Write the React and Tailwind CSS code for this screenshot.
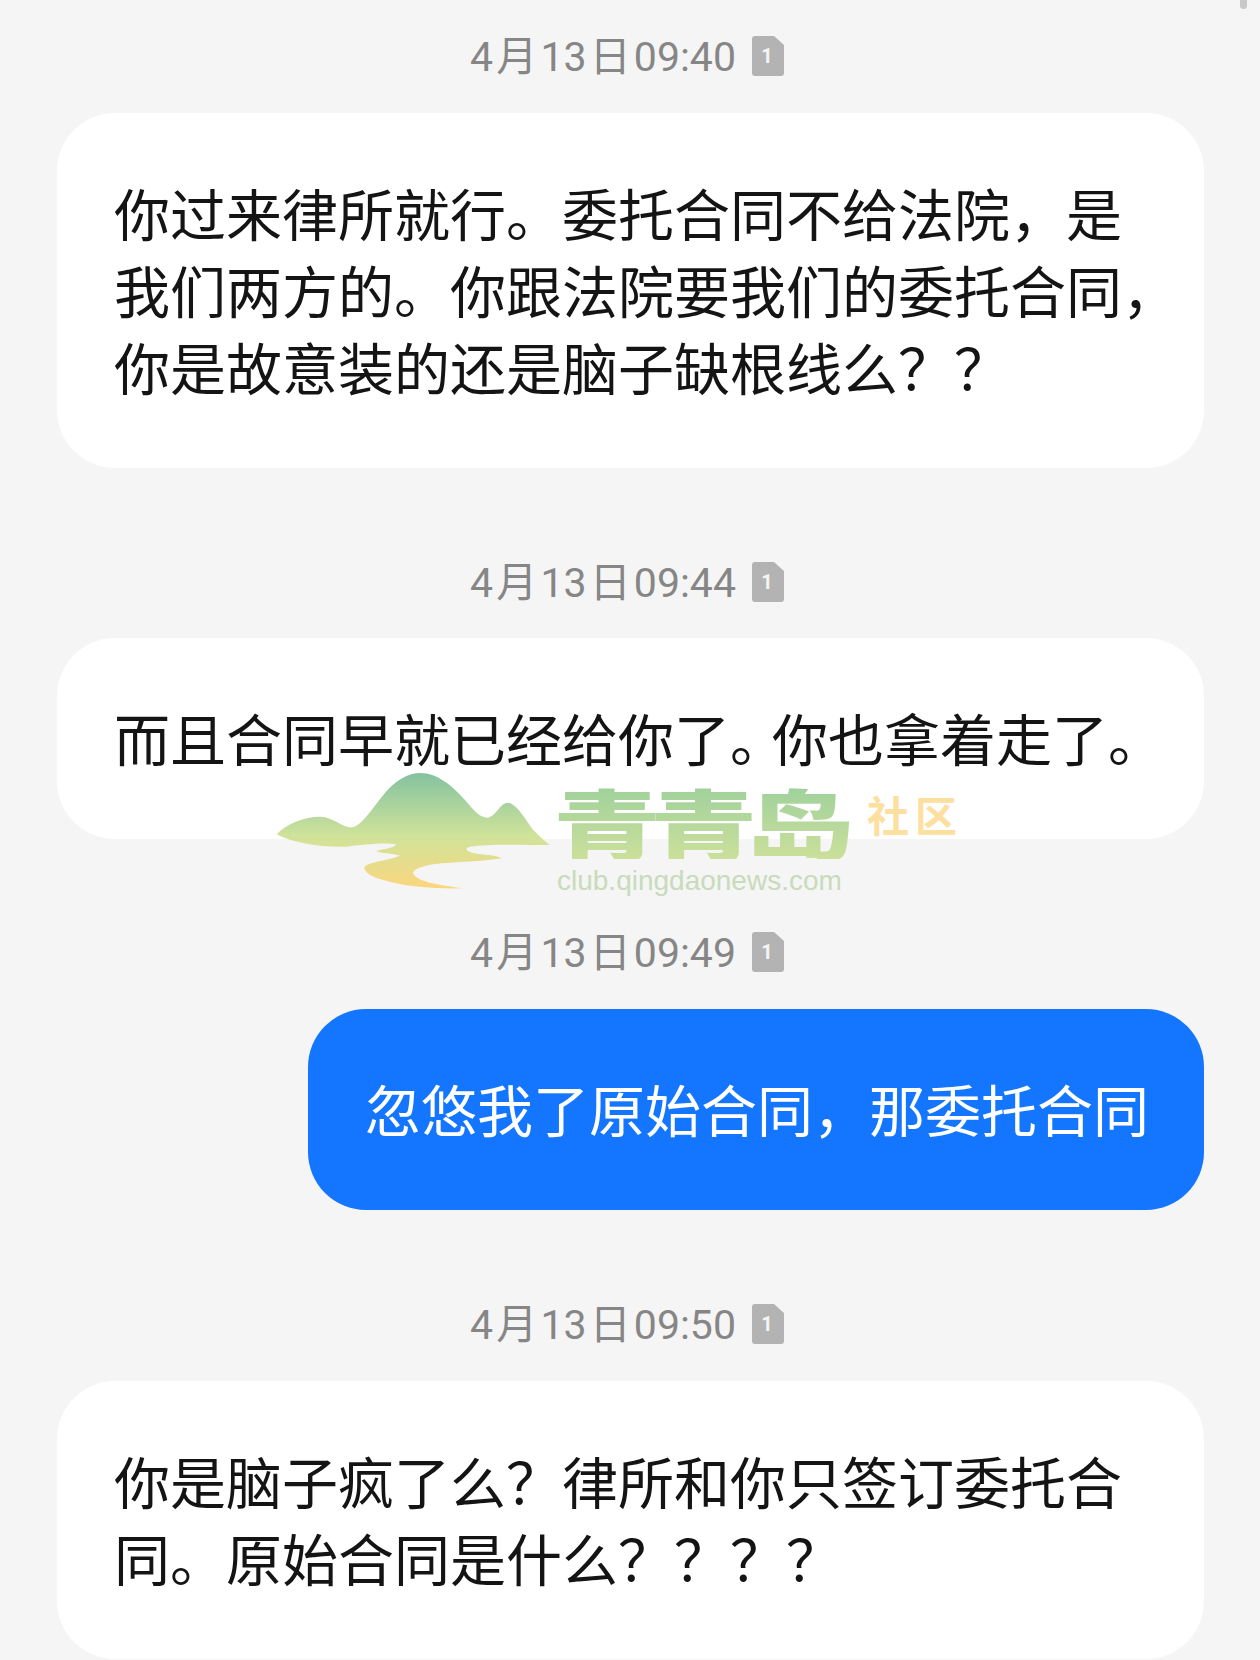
import React from 'react';

const FONT = 'font-["Noto_Sans_CJK_SC","Noto_Sans",sans-serif]';

function DocBadge() {
  return (
    <svg width="32" height="40" viewBox="0 0 32 40" className="block -ml-px -mt-[3px]">
      <path
        d="M3 0H22L32 9V37Q32 40 29 40H3Q0 40 0 37V3Q0 0 3 0Z"
        fill="#b3b3b3"
      />
      <text x="15" y="27" textAnchor="middle" fontSize="20" fontWeight="700" fill="#f5f5f5" fontFamily="Roboto, sans-serif">
        1
      </text>
    </svg>
  );
}

function TimeRow({ time, className }) {
  return (
    <div className={`h-14 pr-[6px] flex items-center justify-center gap-[17px] ${className}`}>
      <span className="text-[41px] leading-none text-[#868686] font-['Roboto','Noto_Sans_CJK_SC',sans-serif] [word-spacing:-7px]">
        4 月 13 日 {time}
      </span>
      <DocBadge />
    </div>
  );
}

function Bubble({ lines, mine }) {
  return (
    <div
      className={
        mine
          ? 'w-[896px] ml-auto -mr-px pl-[57px] pt-[60px] pb-[64px] rounded-[58px] bg-[#1476ff] text-white'
          : '-mr-px pl-[57px] pt-[60px] pb-[64px] rounded-[58px] bg-white text-[#141414]'
      }
    >
      {lines.map((line, i) => (
        <div key={i} className="text-[56px] leading-[77px] whitespace-nowrap">
          {line}
        </div>
      ))}
    </div>
  );
}

function Watermark() {
  return (
    <div className="absolute left-[270px] top-[765px] flex items-start pointer-events-none">
      <svg width="290" height="130" viewBox="0 0 870 390" className="block">
        <defs>
          <linearGradient id="hill" gradientUnits="userSpaceOnUse" x1="0" y1="24" x2="0" y2="370">
            <stop offset="0" stopColor="#84c2a0" />
            <stop offset="0.55" stopColor="#d0e39a" />
            <stop offset="1" stopColor="#fbd67e" />
          </linearGradient>
        </defs>
        <path
          d="M20 208C50 175 105 155 150 155C190 155 215 188 245 187C275 182 300 140 340 90C375 45 415 24 452 24C500 24 545 60 585 105C610 135 630 160 655 158C680 150 690 115 712 113C740 113 770 170 790 195C810 215 825 230 840 240C760 240 650 236 600 245C580 250 590 262 620 266C650 270 680 270 695 280C640 290 560 290 490 298C450 305 425 315 430 328C445 350 510 362 580 370C500 372 400 365 340 345C300 335 280 318 283 305C300 290 360 285 390 272C370 265 330 265 318 258C340 252 375 250 378 238C340 232 280 240 230 245C160 248 70 235 20 208Z"
          fill="url(#hill)"
        />
      </svg>
      <div className="-ml-[7px] mt-[18px] flex flex-col">
        <div className="flex items-start">
          <div className="w-[296px] h-[76px]">
            <span className="block origin-left [transform:scaleX(1.42)] text-[76px] leading-[76px] tracking-[-8px] font-black font-['Noto_Sans_CJK_SC',sans-serif] bg-gradient-to-b from-[#9dd09c] to-[#cbe09a] bg-clip-text text-transparent whitespace-nowrap">
              青青岛
            </span>
          </div>
          <span className="ml-[18px] mt-[8px] text-[42px] leading-[46px] font-bold tracking-[6px] text-[#fde0a0] font-['Noto_Sans_CJK_SC',sans-serif] whitespace-nowrap">
            社区
          </span>
        </div>
        <span className="mt-[8px] ml-[4px] text-[28px] leading-[28px] text-[#c8dbbb] font-['Liberation_Sans',sans-serif]">
          club.qingdaonews.com
        </span>
      </div>
    </div>
  );
}

export default function App() {
  return (
    <div className={`relative w-[1260px] h-[1660px] overflow-hidden bg-[#f5f5f5] px-[57px] ${FONT}`}>
      {/* 滚动条 */}
      <div className="absolute left-[1240px] top-0 w-[7px] h-[9px] rounded-b-full bg-[#c8c8c8]" />

      <TimeRow time="09:40" className="mt-[29px] mb-[28px]" />
      <Bubble
        lines={[
          '你过来律所就行。委托合同不给法院，是',
          '我们两方的。你跟法院要我们的委托合同，',
          '你是故意装的还是脑子缺根线么？？',
        ]}
      />

      <TimeRow time="09:44" className="mt-[87px] mb-[27px]" />
      <Bubble
        lines={[
          <>
            而且合同早就已经给你了<span className="-mr-[14px]">。</span>你也拿着走了。
          </>,
        ]}
      />

      <TimeRow time="09:49" className="mt-[86px] mb-[28px]" />
      <Bubble mine lines={['忽悠我了原始合同，那委托合同']} />

      <TimeRow time="09:50" className="mt-[87px] mb-[28px]" />
      <Bubble
        lines={[
          '你是脑子疯了么？律所和你只签订委托合',
          '同。原始合同是什么？？？？',
        ]}
      />

      <Watermark />
    </div>
  );
}
